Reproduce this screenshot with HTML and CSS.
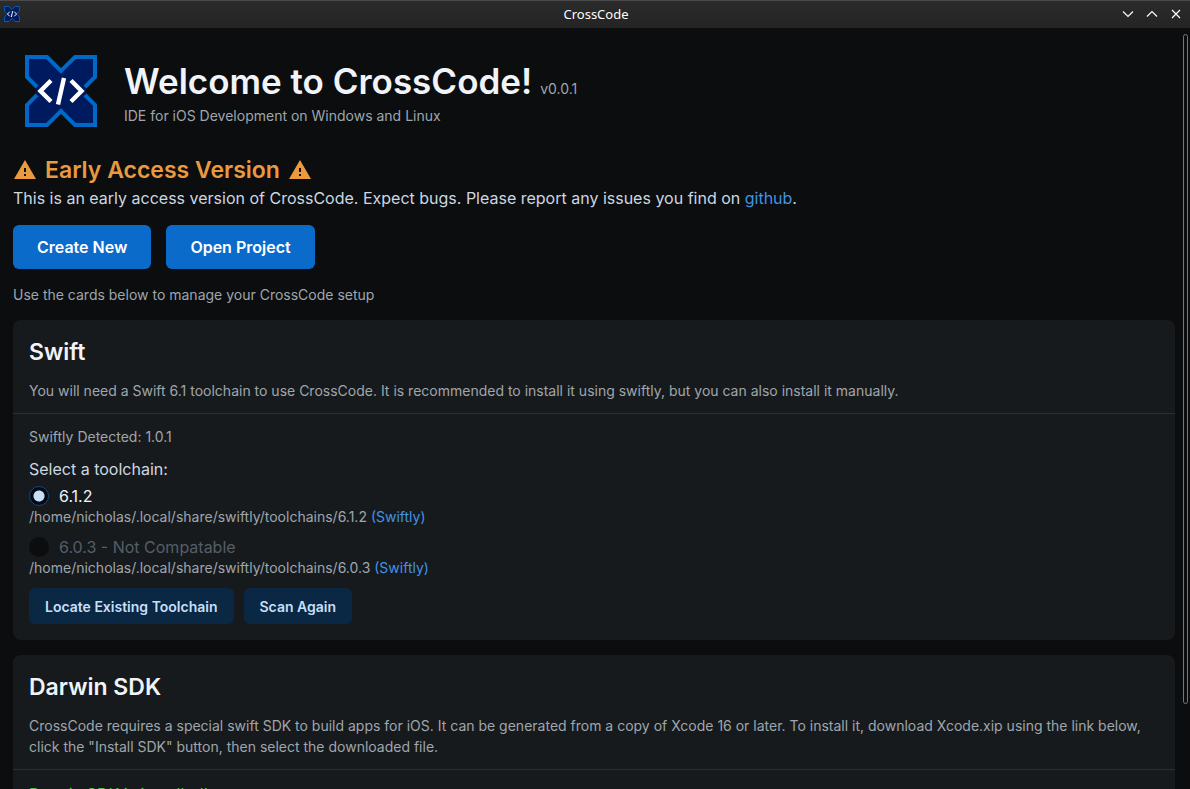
FILE: index.html
```html
<!DOCTYPE html>
<html lang="en">
<head>
<meta charset="utf-8">
<title>CrossCode</title>
<link rel="stylesheet" href="styles.css">
</head>
<body>
<svg class="defs" aria-hidden="true">
  <symbol id="logo" viewBox="0 0 72 72">
    <path d="M2 2H22L36 16L50 2H70V22L56 36L70 50V70H50L36 56L22 70H2V50L16 36L2 22Z" fill="#001a60" stroke="#0069c8" stroke-width="4"/>
    <path d="M12 32L16 36L12 40M60 32L56 36L60 40" fill="none" stroke="#001a60" stroke-width="4.4"/>
    <path d="M26 25.500L15.500 36L26 46.500M46 25.500L56.500 36L46 46.500M39 23L33 49.500" fill="none" stroke="#fff" stroke-width="4.4"/>
  </symbol>
  <symbol id="warning" viewBox="0 0 24 24">
    <path d="M1 21h22L12 2 1 21zm12-3h-2v-2h2v2zm0-4h-2v-4h2v4z" fill="currentColor"/>
  </symbol>
</svg>
<header class="titlebar">
  <svg class="titlebar-logo" aria-hidden="true"><use href="#logo"/></svg>
  <span class="titlebar-name">CrossCode</span>
  <div class="window-controls">
    <button type="button" aria-label="Minimize"><svg viewBox="0 0 12 12"><path d="M1 3.5L6 8.5L11 3.5"/></svg></button>
    <button type="button" aria-label="Maximize"><svg viewBox="0 0 12 12"><path d="M1 8.5L6 3.5L11 8.5"/></svg></button>
    <button type="button" aria-label="Close"><svg viewBox="0 0 12 12"><path d="M2 2L10 10M10 2L2 10"/></svg></button>
  </div>
</header>
<div class="viewport">
<main class="page">
  <div class="hero">
    <svg class="hero-logo" role="img" aria-label="CrossCode logo"><use href="#logo"/></svg>
    <div>
      <div class="hero-title"><h1>Welcome to CrossCode!</h1><span class="small">v0.0.1</span></div>
      <p class="small">IDE for iOS Development on Windows and Linux</p>
    </div>
  </div>
  <h2 class="notice"><svg aria-hidden="true"><use href="#warning"/></svg>Early Access Version<svg aria-hidden="true"><use href="#warning"/></svg></h2>
  <p class="notice-text">This is an early access version of CrossCode. Expect bugs. Please report any issues you find on <a href="#github">github</a>.</p>
  <div class="actions">
    <button type="button" class="primary">Create New</button>
    <button type="button" class="primary">Open Project</button>
  </div>
  <p class="small hint">Use the cards below to manage your CrossCode setup</p>
  <section class="card">
    <div class="card-head">
      <h2>Swift</h2>
      <p class="small">You will need a Swift 6.1 toolchain to use CrossCode. It is recommended to install it using swiftly, but you can also install it manually.</p>
    </div>
    <div class="card-body">
      <p class="small">Swiftly Detected: 1.0.1</p>
      <fieldset class="toolchains">
        <legend>Select a toolchain:</legend>
        <div class="toolchain">
          <label><input type="radio" name="toolchain" checked>6.1.2</label>
          <p class="small">/home/nicholas/.local/share/swiftly/toolchains/6.1.2 <span class="source">(Swiftly)</span></p>
        </div>
        <div class="toolchain">
          <label class="disabled"><input type="radio" name="toolchain" disabled>6.0.3 - Not Compatable</label>
          <p class="small">/home/nicholas/.local/share/swiftly/toolchains/6.0.3 <span class="source">(Swiftly)</span></p>
        </div>
      </fieldset>
      <div class="card-actions">
        <button type="button" class="soft">Locate Existing Toolchain</button>
        <button type="button" class="soft">Scan Again</button>
      </div>
    </div>
  </section>
  <section class="card">
    <div class="card-head">
      <h2>Darwin SDK</h2>
      <p class="small">CrossCode requires a special swift SDK to build apps for iOS. It can be generated from a copy of Xcode 16 or later. To install it, download Xcode.xip using the link below, click the "Install SDK" button, then select the downloaded file.</p>
    </div>
    <div class="card-body">
      <p class="success">Darwin SDK is installed!</p>
    </div>
  </section>
</main>
<div class="scrollbar" aria-hidden="true"></div>
</div>
</body>
</html>
```

FILE: styles.css
```css
* {
  box-sizing: border-box;
}

body {
  margin: 0;
  height: 100vh;
  display: flex;
  flex-direction: column;
  overflow: hidden;
  background: #0b0d0e;
  color: #cdd7e1;
  font: 16px/24px Inter, sans-serif;
}

h1, h2, p {
  margin: 0;
}

h1, h2 {
  color: #f0f4f8;
  font-weight: 600;
}

h1 {
  font-size: 35px;
  line-height: 48px;
}

h2 {
  font-size: 23px;
  line-height: 32px;
}

button {
  border: 0;
  font-family: inherit;
  font-weight: 600;
}

.defs {
  position: absolute;
  width: 0;
  height: 0;
}

.small {
  font-size: 14px;
  line-height: 21px;
  color: #9fa6ad;
}

.titlebar {
  flex: none;
  height: 28px;
  display: grid;
  grid-template-columns: 1fr auto 1fr;
  align-items: center;
  padding: 0 2px 0 4px;
  background: linear-gradient(#2b2b2b, #242424);
  box-shadow: inset 0 1px #4a4a4a;
}

.titlebar-logo {
  width: 16px;
  height: 16px;
}

.titlebar-name {
  color: #fcfcfc;
  font: 13px/20px "Noto Sans", sans-serif;
}

.window-controls {
  display: flex;
  justify-content: flex-end;
}

.window-controls button {
  display: flex;
  justify-content: center;
  width: 24px;
  padding: 0;
  background: none;
}

.window-controls svg {
  width: 12px;
  height: 12px;
  fill: none;
  stroke: #fcfcfc;
  stroke-width: 1.2;
}

.viewport {
  position: relative;
  flex: 1;
  min-height: 0;
}

.page {
  height: 100%;
  overflow-y: auto;
  scrollbar-width: none;
  padding: 27px 15px 0 13px;
}

.hero {
  display: flex;
  align-items: center;
  gap: 27px;
  padding-left: 12px;
}

.hero-logo {
  width: 72px;
  height: 72px;
}

.hero-title {
  display: flex;
  align-items: baseline;
  gap: 8px;
}

.notice {
  display: flex;
  align-items: center;
  gap: 8px;
  margin-top: 27px;
  color: #ea9a3e;
}

.notice svg {
  width: 24px;
  height: 24px;
}

a, .source {
  color: #4393e4;
  text-decoration: none;
}

.actions {
  display: flex;
  gap: 15px;
  margin-top: 15px;
}

.primary {
  height: 44px;
  padding: 0 24px;
  border-radius: 6px;
  background: #0b6bcb;
  color: #fff;
  font-size: 16px;
}

.hint {
  margin-top: 15px;
}

.card {
  margin-top: 15px;
  border-radius: 8px;
  background: #171a1c;
}

.card-head {
  padding: 16px 16px 12px;
  border-bottom: 1px solid #2b2f32;
}

.card-head p {
  margin-top: 12px;
}

.card-body {
  padding: 12px 16px 16px;
}

.toolchains {
  margin: 10px 0 0;
  padding: 0;
  border: 0;
}

.toolchains legend {
  padding: 0;
}

.toolchain {
  padding: 5px 0;
}

.toolchain label {
  display: flex;
  align-items: center;
  gap: 10px;
  line-height: 20px;
  color: #f0f4f8;
}

.toolchain label.disabled {
  color: #555e68;
}

.toolchain input {
  appearance: none;
  width: 20px;
  height: 20px;
  margin: 0;
  border-radius: 50%;
  background: #0b0d0e;
}

.toolchain input:checked {
  border: 1px solid #12467b;
  background: radial-gradient(circle, #c7dff7 5px, #050a12 6px);
}

.card-actions {
  display: flex;
  gap: 10px;
  margin-top: 5px;
}

.soft {
  height: 36px;
  padding: 0 16px;
  border-radius: 6px;
  background: #0a2744;
  color: #c7dff7;
  font-size: 14px;
}

.success {
  color: #51bc51;
}

.scrollbar {
  position: absolute;
  top: 6px;
  right: 2px;
  width: 5px;
  height: 88%;
  border: 1px solid #777;
  border-radius: 3px;
}
```
